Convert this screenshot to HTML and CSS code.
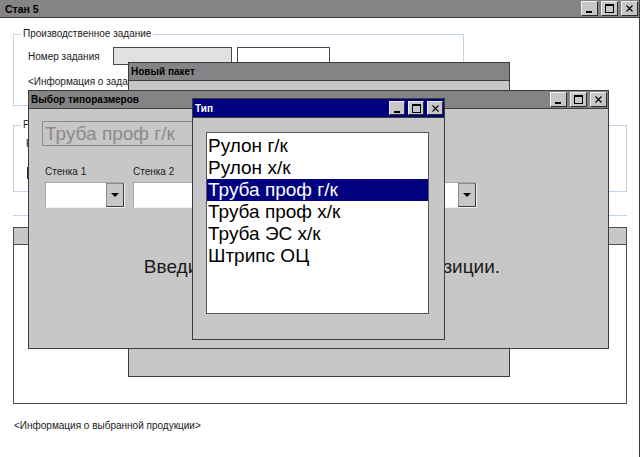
FILE: index.html
```
<!DOCTYPE html>
<html lang="ru">
<head>
    <meta charset="UTF-8">
    <title>Стан 5</title>
    <link rel="stylesheet" href="styles.css">
</head>
<body>
    <div class="app">
        <div class="app-title">
            <span class="title-text title-main">Стан 5</span>
            <div class="caption-buttons">
                <span class="cap-btn"><svg width="11" height="11" viewBox="0 0 11 11"><rect x="2" y="8" width="6" height="2" fill="#000"/></svg></span>
                <span class="cap-btn"><svg width="11" height="11" viewBox="0 0 11 11"><rect x="1.5" y="1.5" width="8" height="8" fill="none" stroke="#000"/><rect x="1" y="1" width="9" height="2" fill="#000"/></svg></span>
                <span class="cap-btn"><svg width="11" height="11" viewBox="0 0 11 11"><path d="M2.5 2.5l6 6M8.5 2.5l-6 6" stroke="#000" stroke-width="1.1"/></svg></span>
            </div>
        </div>

        <div class="app-body">
            <fieldset class="group group-task">
                <legend>Производственное задание</legend>
                <div class="task-row">
                    <span class="task-label">Номер задания</span>
                    <span class="field field-readonly"></span>
                    <span class="field field-number"></span>
                </div>
                <div class="task-info">&lt;Информация о задании&gt;</div>
            </fieldset>

            <fieldset class="group group-sizes">
                <legend>Р</legend>
                <div class="sizes-label">Р</div>
                <div class="sizes-field"></div>
            </fieldset>

            <div class="separator"></div>

            <div class="grid">
                <div class="grid-head"><span class="grid-corner"></span></div>
                <div class="grid-body"></div>
            </div>

            <div class="product-info">&lt;Информация о выбранной продукции&gt;</div>
        </div>

        <!-- окна поверх основной формы -->
        <div class="window win-packet">
            <div class="win-title"><span class="title-text">Новый пакет</span></div>
        </div>

        <div class="window win-sizes">
            <div class="win-title">
                <span class="title-text">Выбор типоразмеров</span>
                <div class="caption-buttons">
                    <span class="cap-btn"><svg width="11" height="11" viewBox="0 0 11 11"><rect x="2" y="8" width="6" height="2" fill="#000"/></svg></span>
                    <span class="cap-btn"><svg width="11" height="11" viewBox="0 0 11 11"><rect x="1.5" y="1.5" width="8" height="8" fill="none" stroke="#000"/><rect x="1" y="1" width="9" height="2" fill="#000"/></svg></span>
                    <span class="cap-btn"><svg width="11" height="11" viewBox="0 0 11 11"><path d="M2.5 2.5l6 6M8.5 2.5l-6 6" stroke="#000" stroke-width="1.1"/></svg></span>
                </div>
            </div>
            <div class="sizes-body">
                <div class="type-field">Труба проф г/к</div>
                <div class="wall-row">
                    <div class="wall">
                        <div class="wall-label">Стенка 1</div>
                        <div class="combo"><span class="combo-input"></span><span class="combo-btn"><span class="arrow"></span></span></div>
                    </div>
                    <div class="wall">
                        <div class="wall-label">Стенка 2</div>
                        <div class="combo"><span class="combo-input"></span><span class="combo-btn"><span class="arrow"></span></span></div>
                    </div>
                    <div class="wall">
                        <div class="wall-label"></div>
                        <div class="combo"><span class="combo-input"></span><span class="combo-btn"><span class="arrow"></span></span></div>
                    </div>
                    <div class="wall">
                        <div class="wall-label"></div>
                        <div class="combo"><span class="combo-input"></span><span class="combo-btn"><span class="arrow"></span></span></div>
                    </div>
                    <div class="wall">
                        <div class="wall-label"></div>
                        <div class="combo"><span class="combo-input"></span><span class="combo-btn"><span class="arrow"></span></span></div>
                    </div>
                </div>
                <div class="sizes-hint">Введите характеристики новой позиции.</div>
            </div>
        </div>

        <div class="window win-type">
            <div class="win-title win-title-active">
                <span class="title-text">Тип</span>
                <div class="caption-buttons">
                    <span class="cap-btn"><svg width="11" height="11" viewBox="0 0 11 11"><rect x="2" y="8" width="6" height="2" fill="#000"/></svg></span>
                    <span class="cap-btn"><svg width="11" height="11" viewBox="0 0 11 11"><rect x="1.5" y="1.5" width="8" height="8" fill="none" stroke="#000"/><rect x="1" y="1" width="9" height="2" fill="#000"/></svg></span>
                    <span class="cap-btn"><svg width="11" height="11" viewBox="0 0 11 11"><path d="M2.5 2.5l6 6M8.5 2.5l-6 6" stroke="#000" stroke-width="1.1"/></svg></span>
                </div>
            </div>
            <div class="type-body">
                <ul class="type-list">
                    <li>Рулон г/к</li>
                    <li>Рулон х/к</li>
                    <li class="selected">Труба проф г/к</li>
                    <li>Труба проф х/к</li>
                    <li>Труба ЭС х/к</li>
                    <li>Штрипс ОЦ</li>
                </ul>
            </div>
        </div>
    </div>
</body>
</html>
```
FILE: styles.css
```
* {
    margin: 0;
    padding: 0;
    box-sizing: border-box;
}

body {
    font-family: "Liberation Sans", Arial, sans-serif;
    font-size: 10px;
    color: #1a1a1a;
    background: #fff;
}

.app {
    position: relative;
    width: 640px;
    height: 457px;
    border-right: 1px solid #3c3c3c;
    overflow: hidden;
    background: #fff;
}

/* title bars */
.app-title,
.win-title {
    display: flex;
    align-items: center;
    justify-content: space-between;
    background: #858385;
    border-bottom: 1px solid #3c3c3c;
}

.app-title {
    height: 18px;
    padding: 0 1px 0 5px;
}

.title-text {
    font-weight: bold;
    font-size: 10px;
    color: #000;
}

.title-main {
    font-size: 10.5px;
}

.caption-buttons {
    display: flex;
    gap: 3px;
}

.cap-btn {
    width: 17px;
    height: 15px;
    display: flex;
    align-items: center;
    justify-content: center;
    background: #c8c6c8;
    border: 1px solid;
    border-color: #efefef #2c2c2c #2c2c2c #efefef;
}

/* main form */
.app-body {
    padding-left: 13px;
}

.group {
    border: 1px solid #c4d4e8;
    padding: 0;
    min-width: 0;
}

.group legend {
    margin-left: 7px;
    padding: 0 2px;
    line-height: 12px;
    font-size: 10px;
}

.group-task {
    width: 451px;
    margin-top: 10px;
    padding-bottom: 17px;
}

.task-row {
    display: flex;
    align-items: center;
    margin-top: 7px;
    padding-left: 14px;
    height: 18px;
}

.task-label {
    width: 85px;
}

.field {
    height: 18px;
    border: 1px solid #4a4a4a;
    background: #fff;
}

.field-readonly {
    width: 119px;
    background: #e1e1e1;
}

.field-number {
    width: 93px;
    margin-left: 5px;
}

.task-info {
    margin-top: 11px;
    padding-left: 14px;
    line-height: 12px;
}

.group-sizes {
    width: 614px;
    margin-top: 13px;
    padding-bottom: 12px;
}

.sizes-label {
    margin-top: 7px;
    padding-left: 12px;
    line-height: 12px;
    color: #1a1a1a;
}

.sizes-field {
    width: 80px;
    height: 12px;
    margin: 17px 0 0 13px;
    border-left: 2px solid #2c2c2c;
}

.separator {
    width: 614px;
    height: 1px;
    margin-top: 23px;
    background: #c4d4e8;
}

.grid {
    width: 614px;
    height: 177px;
    margin-top: 11px;
    border: 1px solid #505050;
}

.grid-head {
    height: 17px;
    background: #c8c6c8;
    border-bottom: 1px solid #505050;
}

.grid-corner {
    display: block;
    width: 15px;
    height: 16px;
    border-right: 1px solid #505050;
}

.product-info {
    margin-top: 16px;
    padding-left: 1px;
    line-height: 12px;
}

/* windows on top */
.window {
    position: absolute;
    background: #c8c6c8;
    border: 1px solid #3c3c3c;
    overflow: hidden;
}

.window .win-title {
    height: 18px;
    padding: 0 1px 0 2px;
}

.win-packet {
    left: 128px;
    top: 62px;
    width: 382px;
    height: 315px;
}

.win-sizes {
    left: 28px;
    top: 90px;
    width: 581px;
    height: 259px;
}

.win-type {
    left: 192px;
    top: 98px;
    width: 253px;
    height: 242px;
}

.window .win-title-active {
    height: 19px;
    background: #000080;
}

.win-title-active .title-text {
    color: #fff;
}

.win-title-active .cap-btn {
    width: 16px;
    height: 14px;
}

/* Выбор типоразмеров */
.sizes-body {
    padding: 12px 0 0 13px;
}

.type-field {
    width: 330px;
    height: 25px;
    padding-left: 2px;
    border: 1px solid #8c8a8c;
    font-size: 19px;
    line-height: 23px;
    color: #8c8a8c;
}

.wall-row {
    display: flex;
    gap: 8px;
    margin-top: 20px;
    padding-left: 3px;
}

.wall {
    width: 80px;
}

.wall-label {
    height: 12px;
    line-height: 12px;
}

.combo {
    display: flex;
    height: 26px;
    margin-top: 4px;
    border: 1px solid;
    border-color: #a8a8a8 #f2f2f2 #f2f2f2 #a8a8a8;
}

.combo-input {
    flex: 1;
    background: #fff;
}

.combo-btn {
    width: 18px;
    display: flex;
    align-items: center;
    justify-content: center;
    background: #c8c6c8;
    border: 1px solid;
    border-color: #8a8a8a #3a3a3a #3a3a3a #8a8a8a;
}

.arrow {
    width: 0;
    height: 0;
    border-left: 4px solid transparent;
    border-right: 4px solid transparent;
    border-top: 4px solid #000;
}

.sizes-hint {
    margin-top: 48px;
    padding-right: 6px;
    text-align: center;
    font-size: 19px;
    line-height: 22px;
    color: #1a1a1a;
    white-space: nowrap;
}

/* Тип */
.type-body {
    padding: 14px 0 0 13px;
}

.type-list {
    list-style: none;
    width: 223px;
    height: 182px;
    padding-top: 2px;
    background: #fff;
    border: 1px solid #5a5a5a;
}

.type-list li {
    height: 22px;
    padding-left: 1px;
    font-size: 19px;
    line-height: 22px;
    color: #000;
    white-space: nowrap;
}

.type-list li.selected {
    background: #000080;
    color: #fff;
}
```
